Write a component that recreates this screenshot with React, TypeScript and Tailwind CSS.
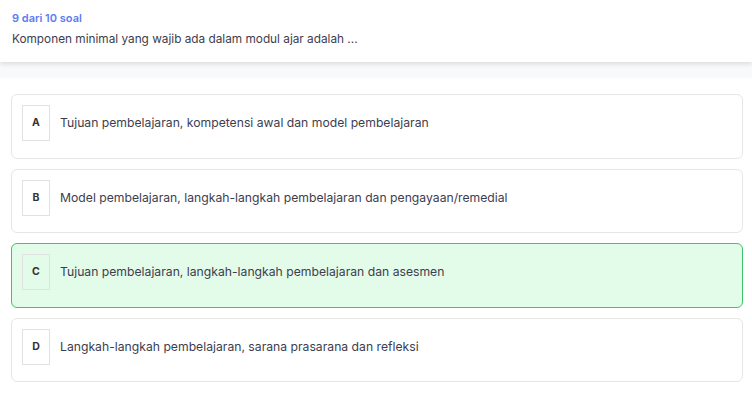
const options = [
  { key: "A", text: "Tujuan pembelajaran, kompetensi awal dan model pembelajaran" },
  { key: "B", text: "Model pembelajaran, langkah-langkah pembelajaran dan pengayaan/remedial" },
  { key: "C", text: "Tujuan pembelajaran, langkah-langkah pembelajaran dan asesmen", selected: true },
  { key: "D", text: "Langkah-langkah pembelajaran, sarana prasarana dan refleksi" },
];

export default function App() {
  return (
    <div className="min-h-[395px] bg-white font-['Inter',sans-serif] text-[#3d3d4e]">
      <div className="relative z-10 h-[62px] bg-white px-3 pt-[10px] shadow-[0_2px_5px_rgba(0,0,0,0.12)]">
        <div className="text-[11px] font-semibold leading-[16px] text-[#5c7cf2]">9 dari 10 soal</div>
        <div className="mt-[5px] text-[11.8px] leading-[16px]">
          Komponen minimal yang wajib ada dalam modul ajar adalah ...
        </div>
      </div>
      <div className="h-4 bg-[#f8f9fb]" />

      <div className="flex flex-col gap-[10px] pl-[11px] pr-[9px] pt-4">
        {options.map((o) => (
          <div
            key={o.key}
            className={
              o.selected
                ? "flex h-[64.5px] items-start gap-[10px] rounded-md border border-[#3ec46d] bg-[#e3fbe9] px-[10px] pt-[10px]"
                : "flex h-[64.5px] items-start gap-[10px] rounded-md border border-[#e6e6e6] bg-white px-[10px] pt-[10px]"
            }
          >
            <div className="flex h-[36px] w-[28px] shrink-0 items-center justify-center border border-[#e2e2e2] text-[10.5px] font-bold text-[#333]">
              {o.key}
            </div>
            <div className="pt-[10px] text-[12.2px] leading-[16px]">{o.text}</div>
          </div>
        ))}
      </div>
    </div>
  );
}
